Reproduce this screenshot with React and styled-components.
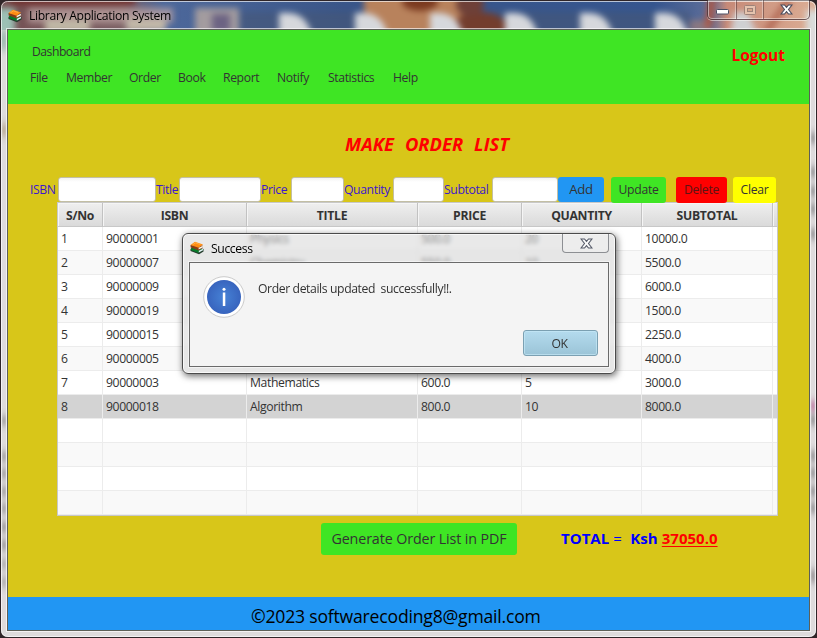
import React from "react";
import styled, { createGlobalStyle, css } from "styled-components";

const GlobalStyle = createGlobalStyle`
  * { box-sizing: border-box; }
  html, body { margin: 0; padding: 0; overflow: hidden; }
  body { font-family: "Open Sans", "Noto Sans", sans-serif; font-size: 12.2px; letter-spacing: -0.38px; color: #333; }
  button { font-family: inherit; }
`;

const Window = styled.div`
  position: relative;
  isolation: isolate;
  width: 817px;
  height: 638px;
  padding: 0 7px 7px;
  display: flex;
  flex-direction: column;
  overflow: hidden;
  background: #d9d6d8;
`;

const Glass = styled.svg`
  position: absolute;
  inset: 0;
  z-index: -1;
`;

const TitleBar = styled.header`
  height: 29px;
  flex: none;
  display: flex;
  align-items: flex-start;
  justify-content: space-between;
`;

const Caption = styled.div`
  display: flex;
  align-items: center;
  gap: 7px;
  color: #000;
  line-height: 17px;
  letter-spacing: ${(p) => p.$track || -0.38}px;
  padding: ${(p) => p.$pad || "7px 0 0 1px"};
  white-space: pre;
`;

const WindowButtons = styled.div`
  display: flex;
  width: 103px;
  height: 20px;
  border: 1px solid rgba(70, 50, 55, 0.75);
  border-top: 0;
  border-radius: 0 0 5px 5px;
  box-shadow: inset 0 0 0 1px rgba(255, 255, 255, 0.45), 0 1px 0 rgba(255, 255, 255, 0.5);
`;

const WindowButton = styled.div`
  width: ${(p) => p.$w}px;
  display: flex;
  justify-content: center;
  align-items: center;
  padding-top: ${(p) => p.$drop || 0}px;
  border-right: 1px solid rgba(80, 55, 55, 0.55);
  box-shadow: inset -1px 0 0 rgba(255, 255, 255, 0.35);
  &:last-child { border-right: 0; box-shadow: none; }
`;

const Client = styled.main`
  flex: 1;
  min-height: 0;
  width: 803px;
  border: 1px solid #5d6058;
  display: flex;
  flex-direction: column;
  box-shadow: 0 0 0 1px rgba(255, 255, 255, 0.65);
`;

const Banner = styled.section`
  height: 74px;
  flex: none;
  background: #3fe524;
  display: flex;
  justify-content: space-between;
  padding: 12px 24px 0 22px;
`;

const Crumb = styled.div`
  height: 18px;
  line-height: 19px;
  padding-left: 2px;
  letter-spacing: -0.5px;
`;

const Menu = styled.nav`
  display: grid;
  grid-template-columns: 36px 63px 49px 45px 54px 51px 65px 40px;
  margin-top: 8px;
  line-height: 19px;
`;

const MenuItem = styled.span`
  white-space: nowrap;
`;

const Logout = styled.a`
  color: #f00;
  font-weight: 700;
  font-size: 15.5px;
  letter-spacing: 0;
  line-height: 20px;
  margin-top: 3px;
`;

const Body = styled.section`
  height: 493px;
  flex: none;
  background: #d8c619;
  display: flex;
  flex-direction: column;
`;

const Heading = styled.h1`
  margin: 28px 0 0 337px;
  font-size: 18.4px;
  line-height: 24px;
  font-style: italic;
  font-weight: 700;
  color: #f00;
  white-space: pre;
  letter-spacing: 0;
  word-spacing: 0.7px;
`;

const Form = styled.form`
  display: flex;
  margin: 21px 0 0 22px;
  height: 25px;
  position: relative;
  z-index: 1;
`;

const Label = styled.label`
  width: ${(p) => p.$w}px;
  flex: none;
  color: #3d16cf;
  line-height: 25px;
  white-space: nowrap;
`;

const Field = styled.input`
  width: ${(p) => p.$w}px;
  height: 25px;
  flex: none;
  border: 1px solid #c3bfa4;
  border-radius: 3px;
  background: linear-gradient(#f3f3f3, #fff 4px);
  padding: 0 4px;
  outline: 0;
`;

const Button = styled.button`
  width: ${(p) => p.$w}px;
  height: ${(p) => p.$h || 26}px;
  flex: none;
  margin-right: ${(p) => p.$after || 0}px;
  padding: 0 0 1px;
  border: 0;
  border-radius: 3px;
  background: ${(p) => p.$bg};
  color: ${(p) => p.$fg || "#333"};
  font-size: ${(p) => p.$size || 12.2}px;
  letter-spacing: ${(p) => p.$track || -0.3}px;
`;

const Table = styled.div`
  width: 721px;
  margin-left: 49px;
  height: 314px;
  flex: none;
  border: 1px solid #c8c8c8;
  background: #fff;
`;

const Row = styled.div`
  display: grid;
  grid-template-columns: 45px 144px 171px 104px 120px 131px 4px;
  height: 24px;
  line-height: 23px;
  background: ${(p) => (p.$selected ? "#d3d3d3" : p.$odd ? "#f9f9f9" : "#fff")};
  ${(p) =>
    p.$head &&
    css`
      font-weight: 700;
      text-align: center;
      background: linear-gradient(#efefef, #d9d9d9);
    `}
`;

const Cell = styled.div`
  height: 24px;
  border-right: 1px solid ${(p) => (p.$head ? "#c2c2c2" : "#ececec")};
  border-bottom: 1px solid ${(p) => (p.$head ? "#c8c8c8" : "#ececec")};
  padding-left: ${(p) => (p.$head ? 0 : 3)}px;
  letter-spacing: ${(p) => (p.$head ? "-0.3px" : "-0.38px")};
  white-space: nowrap;
  &:last-child { border-right: 0; }
  ${(p) => p.$head && "line-height: 25px; box-shadow: inset 1px 1px 0 #f5f5f5;"}
`;

const Summary = styled.div`
  display: flex;
  margin: 7px 0 0 313px;
`;

const Total = styled.div`
  margin-left: 44px;
  line-height: 31px;
  font-size: 15px;
  font-weight: 700;
  color: #00f;
  white-space: pre;
  letter-spacing: 0;
  word-spacing: 0.3px;
`;

const Equals = styled.span`
  font-weight: 400;
`;

const Amount = styled.span`
  color: #f00;
  text-decoration: underline;
  text-decoration-thickness: 1px;
  text-underline-offset: 2px;
`;

const Footer = styled.footer`
  flex: 1;
  min-height: 0;
  background: #2196f3;
  color: #000;
  font-size: 17.6px;
  letter-spacing: -0.2px;
  line-height: 39px;
  padding-left: 243px;
  white-space: nowrap;
  overflow: hidden;
`;

const Dialog = styled.div`
  position: absolute;
  z-index: 5;
  left: 182px;
  top: 233px;
  width: 434px;
  height: 141px;
  border: 1px solid #4b4b4b;
  border-radius: 6px;
  padding: 0 6px 6px;
  background: rgba(212, 212, 212, 0.5);
  backdrop-filter: blur(2px);
  box-shadow: inset 0 0 0 1px rgba(255, 255, 255, 0.75), 1px 2px 7px rgba(0, 0, 0, 0.6);
`;

const DialogBar = styled.div`
  height: 28px;
  display: flex;
  justify-content: space-between;
`;

const DialogClose = styled.div`
  width: 47px;
  height: 19px;
  display: flex;
  align-items: center;
  justify-content: center;
  padding-left: 1px;
  border: 1px solid #8d8f93;
  border-top: 0;
  border-radius: 0 0 4px 4px;
  background: rgba(240, 240, 240, 0.6);
`;

const DialogBody = styled.div`
  height: 105px;
  border: 1px solid #6a6a6a;
  background: #f4f4f4;
  box-shadow: 0 0 0 1px rgba(255, 255, 255, 0.5);
  display: grid;
  grid-template-columns: 68px 1fr 75px;
  padding: 0 10px 0 0;
`;

const IconSlot = styled.div`
  padding: 13px 0 0 13px;
`;

const Message = styled.p`
  margin: 16px 0 0;
  line-height: 19px;
  white-space: pre;
  letter-spacing: -0.39px;
`;

const OkButton = styled.button`
  align-self: end;
  margin-bottom: 10px;
  height: 26px;
  border: 1px solid #7ba0b2;
  border-radius: 3px;
  background: linear-gradient(#b4dbee, #9bc4d7);
  box-shadow: inset 0 0 0 1px rgba(200, 233, 247, 0.65);
  color: #333;
  font-size: 12.2px;
  letter-spacing: -0.4px;
  padding: 0 2px 0 0;
`;

function Backdrop() {
  const smudges = [138, 172, 191, 209, 234, 420, 456, 473, 491, 508];
  const petals = [279, 355, 430, 505, 580, 655];
  return (
    <Glass width="817" height="638" viewBox="0 0 817 638">
      <defs>
        <filter id="soft" x="-10%" y="-50%" width="120%" height="200%" colorInterpolationFilters="sRGB">
          <feGaussianBlur stdDeviation="3.2" />
        </filter>
        <filter id="faint" x="-50%" y="-20%" width="200%" height="140%" colorInterpolationFilters="sRGB">
          <feGaussianBlur stdDeviation="1.5 4" />
        </filter>
        <linearGradient id="sky" x1="0" x2="1">
          <stop offset="0" stopColor="#745052" />
          <stop offset="0.15" stopColor="#7a5f63" />
          <stop offset="0.2" stopColor="#4d689b" />
          <stop offset="0.42" stopColor="#3a5689" />
          <stop offset="0.8" stopColor="#36568f" />
          <stop offset="0.87" stopColor="#5e6e99" />
          <stop offset="0.89" stopColor="#c78a78" />
          <stop offset="1" stopColor="#dcae95" />
        </linearGradient>
        <clipPath id="bar"><rect width="817" height="30" /></clipPath>
      </defs>
      <rect width="817" height="638" fill="#dedbdc" />
      <g clipPath="url(#bar)">
        <rect width="817" height="30" fill="url(#sky)" />
        <g filter="url(#soft)">
          <rect x="-5" y="8" width="20" height="34" fill="#9cc0b5" />
          <rect x="28" y="8" width="145" height="15" fill="#bfa6a4" opacity=".75" />
          <rect x="45" y="20" width="45" height="12" fill="#c0b9a6" />
          <rect x="126" y="19" width="40" height="12" fill="#c3b9a8" />
          <rect x="10" y="-8" width="125" height="13" fill="#72312f" />
          <rect x="195" y="8" width="44" height="30" fill="#a39c9f" />
          <rect x="212" y="14" width="18" height="18" fill="#6c6383" />
          <rect x="240" y="12" width="450" height="26" fill="#465776" opacity=".6" />
          <path d="M364-8h108v12l12 12-4 24h-90l-26-28z" fill="#b8825c" />
          <ellipse cx="480" cy="26" rx="26" ry="14" fill="#733d2d" />
          <ellipse cx="470" cy="4" rx="14" ry="12" fill="#6e4038" />
          <ellipse cx="420" cy="2" rx="18" ry="9" fill="#7b3a20" />
          {petals.map((x) => (
            <path key={x} d={`M${x} 40V13h8c12 0 22 6 26 27z`} fill="#d6d8dc" />
          ))}
          <rect x="690" y="20" width="22" height="12" fill="#8a7881" />
          <path d="M734 12h14l10 24h-28z" fill="#cfd0d2" />
          <path d="M790 -2l-24 34" stroke="#b46c58" strokeWidth="7" />
          <path d="M712 -2l-4 30" stroke="#b2563f" strokeWidth="7" />
          <rect x="806" y="10" width="20" height="30" fill="#d9dcda" />
        </g>
      </g>
      <g filter="url(#faint)">
        <rect x="0" y="30" width="7" height="20" fill="#a5bdb5" />
        <rect x="2" y="124" width="4" height="12" fill="#b5a38d" />
        {smudges.map((y, i) => (
          <g key={y}>
            {i > 4 && <rect x="2" y={y - 3} width="4" height="7" fill="#807d80" />}
            <rect x="811" y={y - 4} width="4" height="8" fill="#77777a" />
          </g>
        ))}
        <rect x="811" y="402" width="4" height="8" fill="#b45b90" />
        <rect x="811" y="570" width="4" height="12" fill="#8f8b8d" />
        <rect x="2" y="523" width="4" height="8" fill="#807d80" />
        <rect x="2" y="541" width="4" height="8" fill="#807d80" />
        <rect x="2" y="560" width="4" height="8" fill="#9b989a" />
        <rect x="2" y="578" width="4" height="8" fill="#9b989a" />
      </g>
      <path d="M0 0h817v638H0zM1 8v622q0 7 7 7h801q7 0 7-7V8q0-7-7-7H8Q1 1 1 8z" fill="#2f2528" fillRule="evenodd" />
      <rect x="1.5" y="1.5" width="814" height="635" rx="6" fill="none" stroke="#fff" strokeOpacity=".65" />
    </Glass>
  );
}

function BooksIcon() {
  return (
    <svg width="14" height="14" viewBox="0 0 14 14">
      <path d="M.5 8l4.300-3.200L13.500 8v2.600L9 13.300.5 10z" fill="#263c2e" />
      <path d="M.8 8.200l8 3 4.700-2.400-8-2.600z" fill="#159043" />
      <path d="M1.200 6.500l7.500 3V12L1.200 9.200z" fill="#087c2b" />
      <path d="M8.800 9.800l4.200-2v1.400L8.800 11.500z" fill="#e4eff4" />
      <path d="M.5 4l.2 2.500 8 3 4-2.700V4.500z" fill="#863c16" />
      <path d="M8.600 6.800l4.200-2v1.800l-4.200 2z" fill="#f4f3e8" />
      <path d="M.5 4L5 .8l8 2.700-4.400 3.200z" fill="#ff8c13" />
      <path d="M2.500 3.800L5.300 1.900l5 1.600" fill="none" stroke="#ffb64c" strokeWidth=".8" />
    </svg>
  );
}

function CloseGlyph({ dark }) {
  return (
    <svg width="13" height="11" viewBox="0 0 13 11">
      <path
        d="M1 1h3.500l2 2.300L8.500 1H12L8.500 5.500 12 10H8.500l-2-2.300-2 2.300H1l3.500-4.500z"
        fill={dark ? "#fafafa" : "#fff"}
        stroke={dark ? "#555a68" : "#474b5c"}
        strokeWidth="1.1"
      />
    </svg>
  );
}

function InfoIcon() {
  return (
    <svg width="42" height="42" viewBox="0 0 42 42">
      <defs>
        <radialGradient id="info" cx=".5" cy=".5" r=".6">
          <stop offset="0" stopColor="#4682d6" />
          <stop offset="1" stopColor="#355eb9" />
        </radialGradient>
      </defs>
      <circle cx="21" cy="21" r="20.300" fill="#fff" stroke="#cbcbcb" strokeWidth="1" />
      <circle cx="21" cy="21" r="17" fill="url(#info)" />
      <circle cx="21" cy="13.200" r="1.500" fill="#fff" />
      <rect x="19.800" y="16.500" width="2.500" height="13.500" fill="#fff" />
    </svg>
  );
}

const menu = ["File", "Member", "Order", "Book", "Report", "Notify", "Statistics", "Help"];
const columns = ["S/No", "ISBN", "TITLE", "PRICE", "QUANTITY", "SUBTOTAL"];
const orders = [
  ["1", "90000001", "Physics", "500.0", "20", "10000.0"],
  ["2", "90000007", "Chemistry", "550.0", "10", "5500.0"],
  ["3", "90000009", "", "", "", "6000.0"],
  ["4", "90000019", "", "", "", "1500.0"],
  ["5", "90000015", "", "", "", "2250.0"],
  ["6", "90000005", "", "", "", "4000.0"],
  ["7", "90000003", "Mathematics", "600.0", "5", "3000.0"],
  ["8", "90000018", "Algorithm", "800.0", "10", "8000.0"],
  [], [], [], [],
];

export default function App() {
  return (
    <Window>
      <GlobalStyle />
      <Backdrop />
      <TitleBar>
        <Caption $track={-0.34}><BooksIcon />Library Application System</Caption>
        <WindowButtons>
          <WindowButton $w={29} $drop={5}>
            <svg width="13" height="6" viewBox="0 0 13 6">
              <rect x=".5" y=".5" width="12" height="4.500" rx="1" fill="#fff" stroke="#4c4e62" />
            </svg>
          </WindowButton>
          <WindowButton $w={27}>
            <svg width="12" height="10" viewBox="0 0 12 10">
              <rect x=".5" y=".5" width="11" height="9" rx="1" fill="#e5c3ae" stroke="#9d8279" />
              <rect x="3.500" y="3.500" width="5" height="3" fill="#d6a48b" stroke="#9d8279" />
            </svg>
          </WindowButton>
          <WindowButton $w={45}><CloseGlyph /></WindowButton>
        </WindowButtons>
      </TitleBar>
      <Client>
        <Banner>
          <div>
            <Crumb>Dashboard</Crumb>
            <Menu>
              {menu.map((name) => <MenuItem key={name}>{name}</MenuItem>)}
            </Menu>
          </div>
          <Logout>Logout</Logout>
        </Banner>
        <Body>
          <Heading>{"MAKE  ORDER  LIST"}</Heading>
          <Form>
            <Label $w={28}>ISBN</Label>
            <Field $w={98} />
            <Label $w={23}>Title</Label>
            <Field $w={82} />
            <Label $w={30}>Price</Label>
            <Field $w={53} />
            <Label $w={49}>Quantity</Label>
            <Field $w={51} />
            <Label $w={48}>Subtotal</Label>
            <Field $w={66} />
            <Button type="button" $w={46} $h={25} $bg="#2196f3" $size={13.2} $after={7}>Add</Button>
            <Button type="button" $w={55} $bg="#3fe524" $after={10}>Update</Button>
            <Button type="button" $w={51} $bg="#ff0000" $fg="#5c1414" $after={6}>Delete</Button>
            <Button type="button" $w={43} $bg="#ffff00">Clear</Button>
          </Form>
          <Table>
            <Row $head>
              {columns.map((c) => <Cell $head key={c}>{c}</Cell>)}
              <Cell $head />
            </Row>
            {orders.map((order, i) => (
              <Row key={i} $odd={i % 2 === 1} $selected={i === 7}>
                {columns.map((c, j) => <Cell key={c}>{order[j]}</Cell>)}
                <Cell />
              </Row>
            ))}
          </Table>
          <Summary>
            <Button type="button" $w={196} $h={32} $bg="#3fe524" $size={14.3} $track={-0.12}>
              Generate Order List in PDF
            </Button>
            <Total>TOTAL <Equals>= </Equals> Ksh <Amount>37050.0</Amount></Total>
          </Summary>
        </Body>
        <Footer>©2023 softwarecoding8@gmail.com</Footer>
      </Client>
      <Dialog>
        <DialogBar>
          <Caption $pad="0 0 0 1px"><BooksIcon />Success</Caption>
          <DialogClose><CloseGlyph dark /></DialogClose>
        </DialogBar>
        <DialogBody>
          <IconSlot><InfoIcon /></IconSlot>
          <Message>{"Order details updated  successfully!!."}</Message>
          <OkButton type="button">OK</OkButton>
        </DialogBody>
      </Dialog>
    </Window>
  );
}
